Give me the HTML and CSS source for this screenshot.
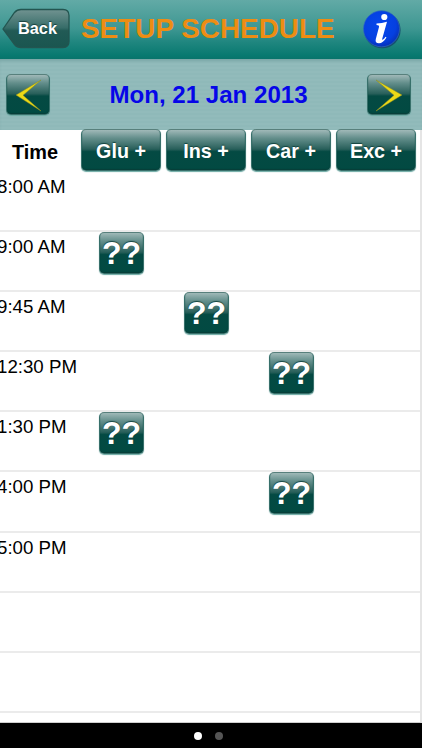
FILE: index.html
```html
<!DOCTYPE html>
<html lang="en">
<head>
    <meta charset="UTF-8">
    <meta name="viewport" content="width=device-width, initial-scale=1.0">
    <title>Setup Schedule</title>
    <link rel="stylesheet" href="styles.css">
</head>
<body>

    <!-- Title bar -->
    <header class="navbar">
        <button class="back">
            <svg class="back-shape" viewBox="0 0 68 42" width="68" height="42">
                <defs>
                    <linearGradient id="backFill" x1="0" y1="0" x2="0" y2="1">
                        <stop offset="0" stop-color="#719391"/>
                        <stop offset="0.48" stop-color="#376d69"/>
                        <stop offset="0.56" stop-color="#215a55"/>
                        <stop offset="1" stop-color="#1a5650"/>
                    </linearGradient>
                </defs>
                <path d="M1 21 L12.500 4.500 Q15 1.500 19 1.500 H61 Q67 1.500 67 7.500 V33.500 Q67 39.500 61 39.500 H19 Q15 39.500 12.500 36.500 Z" fill="url(#backFill)" stroke="#235550" stroke-width="1.300"/>
            </svg>
            <span class="back-label">Back</span>
        </button>
        <h1>SETUP SCHEDULE</h1>
        <svg class="info" viewBox="0 0 40 40" width="40" height="40">
            <defs>
                <radialGradient id="infoFill" cx="0.45" cy="0.4" r="0.6">
                    <stop offset="0" stop-color="#0648ec"/>
                    <stop offset="0.75" stop-color="#0540e0"/>
                    <stop offset="1" stop-color="#0632b8"/>
                </radialGradient>
            </defs>
            <circle cx="20.300" cy="20" r="18.300" fill="#164f6e"/>
            <circle cx="19.500" cy="18.800" r="18" fill="url(#infoFill)" stroke="#2e68bd" stroke-width="0.700"/>
            <circle cx="22.300" cy="7" r="3.100" fill="#fff"/>
            <path d="M14.500 13.500 Q20 13.200 25 11.800 L20.300 28.500 Q19.800 30.300 21 29.600 Q22.300 28.800 23.500 26.800 L24.500 27.500 Q21 33.300 17 33.300 Q12.800 33.300 13.800 29 L17 17 Q17.500 15.200 14.500 15 Z" fill="#fff"/>
        </svg>
    </header>

    <!-- Day picker -->
    <div class="datebar">
        <button class="glossy arrow">
            <svg viewBox="0 0 42 40" width="42" height="40">
                <path d="M34 5 L9 20 L34 36 L16 20.300 Z" fill="#ecd916" stroke="#8b8d24" stroke-width="0.500"/>
            </svg>
        </button>
        <span class="date">Mon, 21 Jan 2013</span>
        <button class="glossy arrow">
            <svg viewBox="0 0 42 40" width="42" height="40">
                <path d="M8 5 L34 20 L8 36 L26 20.300 Z" fill="#ecd916" stroke="#8b8d24" stroke-width="0.500"/>
            </svg>
        </button>
    </div>

    <!-- Schedule -->
    <main class="schedule">
        <div class="columns">
            <span class="time-title">Time</span>
            <button class="glossy add">Glu +</button>
            <button class="glossy add">Ins +</button>
            <button class="glossy add">Car +</button>
            <button class="glossy add">Exc +</button>
        </div>
        <div class="row"><span class="time">8:00 AM</span></div>
        <div class="row"><span class="time">9:00 AM</span><button class="glossy entry glu">??</button></div>
        <div class="row"><span class="time">9:45 AM</span><button class="glossy entry ins">??</button></div>
        <div class="row"><span class="time">12:30 PM</span><button class="glossy entry car">??</button></div>
        <div class="row"><span class="time">1:30 PM</span><button class="glossy entry glu">??</button></div>
        <div class="row"><span class="time">4:00 PM</span><button class="glossy entry car">??</button></div>
        <div class="row"><span class="time">5:00 PM</span></div>
        <div class="row"></div>
        <div class="row"></div>
    </main>

    <!-- Page dots -->
    <footer class="pager">
        <span class="dot current"></span>
        <span class="dot"></span>
    </footer>

</body>
</html>
```

FILE: styles.css
```css
* { box-sizing: border-box; }

body {
    margin: 0;
    width: 422px;
    height: 750px;
    background: white;
    font-family: "Liberation Sans", Arial, sans-serif;
    display: flex;
    flex-direction: column;
    overflow: hidden;
}

button {
    padding: 0;
    border: none;
    background: none;
    font-family: inherit;
    font-weight: bold;
    color: white;
}

/* Title bar */
.navbar {
    flex: none;
    height: 59px;
    padding: 0 20px 0 2px;
    display: flex;
    align-items: center;
    background: linear-gradient(#62aaa6 0%, #3e9792 48%, #218780 70%, #087970 94%, #08746b 100%);
}
.back {
    display: grid;
    width: 68px;
    height: 42px;
    margin-top: -1px;
}
.back-shape, .back-label { grid-area: 1 / 1; }
.back-label {
    align-self: center;
    padding: 0 0 1px 3px;
    font-size: 16.3px;
    text-shadow: 0 -1px 1px #173f3c;
}
h1 {
    margin: 0 0 1px 11px;
    font-size: 27.9px;
    line-height: 32px;
    color: #ed8d13;
    white-space: nowrap;
}
.info { margin-left: auto; }

/* Glossy green buttons */
.glossy {
    flex: none;
    border: 1px solid #38706b;
    border-top-color: #58807c;
    border-radius: 5px;
    background: linear-gradient(#a0b9b8 0%, #648f8c 20%, #285f5a 48%, #044a43 54%, #024a42 100%);
    box-shadow: inset 0 -1px 1px #073f39, 0 1px 1px #6caaa4;
    text-shadow: 0 -1px 1px #12433e;
}

/* Day picker */
.datebar {
    flex: none;
    height: 71px;
    padding: 0 11px 0 6px;
    display: flex;
    align-items: center;
    justify-content: space-between;
    background: repeating-linear-gradient(#92bbbb 0 2px, #8fb9b9 2px 4px);
    box-shadow: inset 0 3px 3px -1px #79a6a6;
}
.arrow {
    width: 44px;
    height: 41px;
    display: flex;
    align-items: center;
    justify-content: center;
}
.arrow svg { flex: none; }
.date {
    font-size: 24.1px;
    font-weight: bold;
    color: #0606e8;
}

/* Schedule table */
.schedule {
    height: 593px;
    overflow: visible;
    border-right: 2px solid #e5e5e5;
    border-bottom: 1px solid #cfcfcf;
}
.columns {
    height: 42px;
    display: flex;
    gap: 5px;
}
.time-title {
    width: 76px;
    padding: 11px 0 0 12px;
    font-size: 19.9px;
    line-height: 23px;
    font-weight: bold;
}
.add {
    width: 80px;
    height: 42px;
    margin-top: -1px;
    font-size: 19.7px;
    line-height: 42px;
}
.row {
    height: 60.1px;
    display: flex;
    align-items: flex-start;
    border-bottom: 2px solid #ebebeb;
}
.time {
    width: 99px;
    margin-left: -3px;
    padding-top: 4px;
    font-size: 18.7px;
    line-height: 22px;
    white-space: nowrap;
}
.entry {
    width: 45px;
    height: 42px;
    font-size: 32px;
    line-height: 38px;
}
.glu { margin-left: 3px; }
.ins { margin-left: 88px; }
.car { margin-left: 173px; }

/* Page dots */
.pager {
    flex: none;
    height: 25px;
    display: flex;
    align-items: center;
    justify-content: center;
    gap: 13px;
    padding-right: 5px;
    background: black;
}
.dot {
    width: 8px;
    height: 8px;
    border-radius: 50%;
    background: #555;
}
.current { background: white; }
```
